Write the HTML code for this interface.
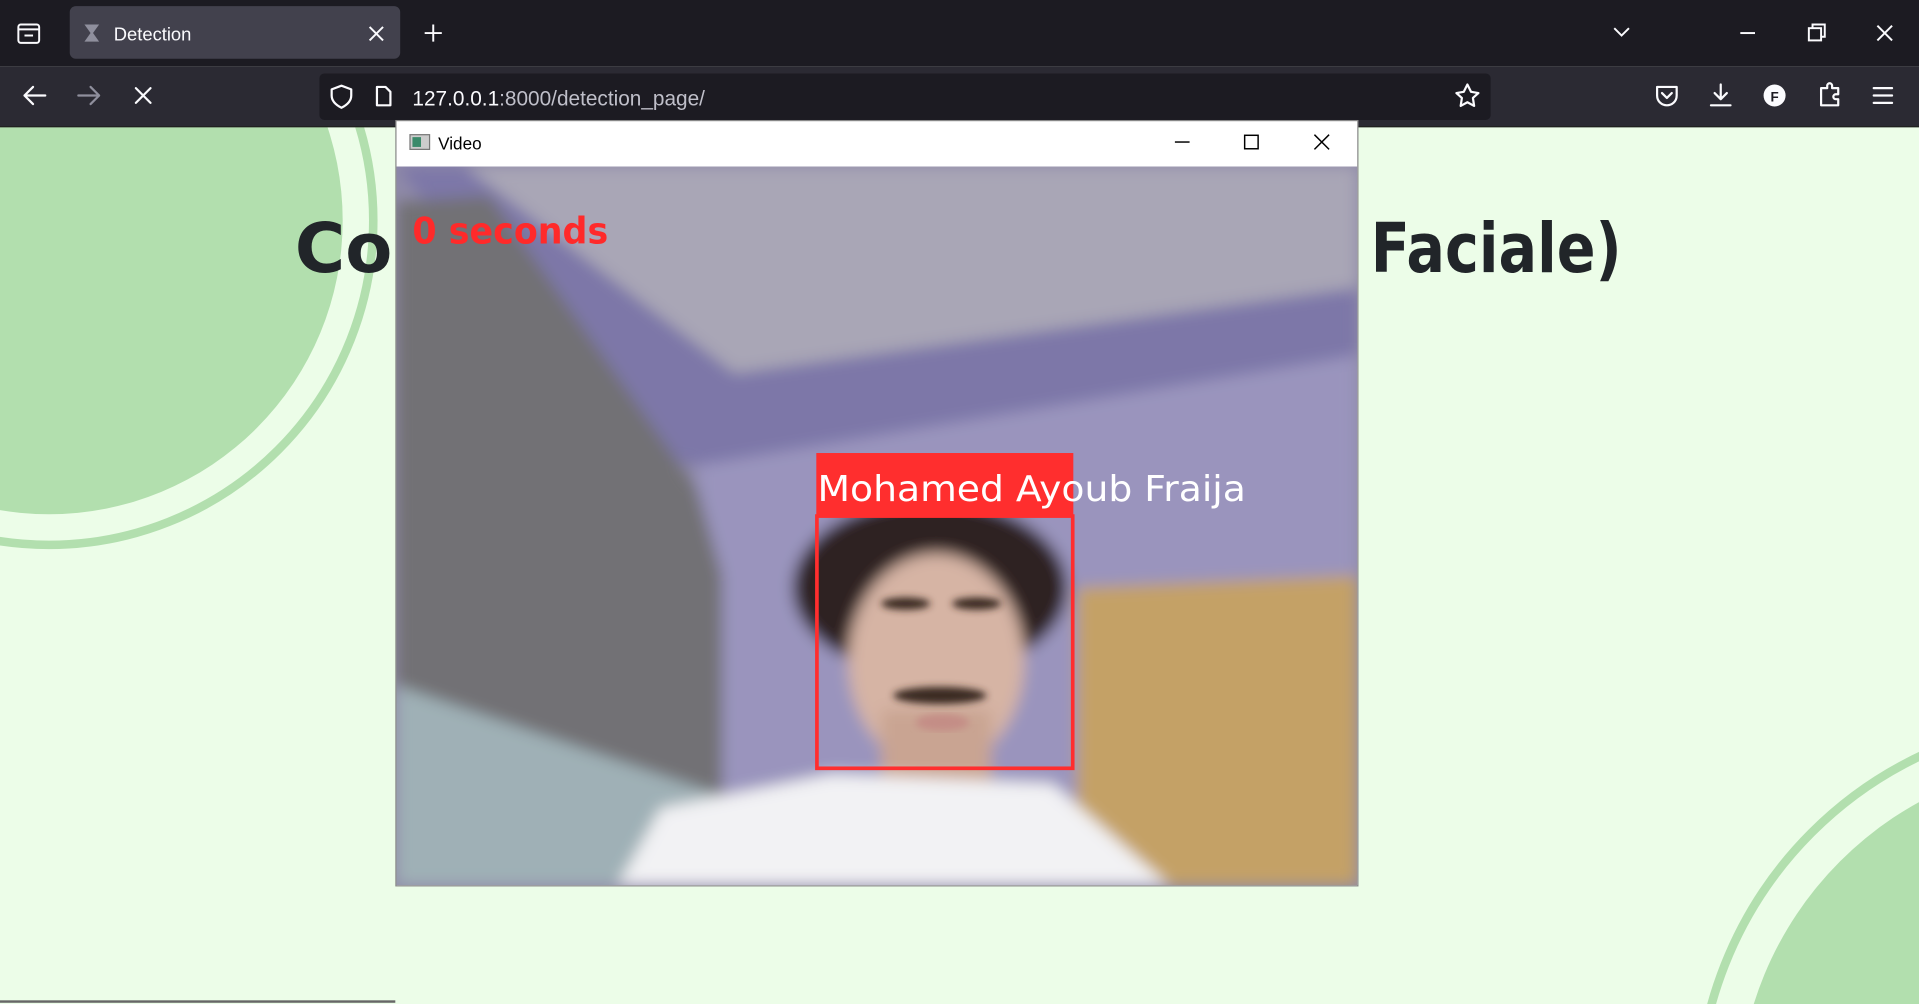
<!DOCTYPE html>
<html><head><meta charset="utf-8"><style>
html,body{margin:0;padding:0;width:1919px;height:1004px;overflow:hidden;background:#ecfde8}
svg{display:block;position:absolute;left:0;top:0}
</style></head><body>
<svg width="1919" height="1004" viewBox="0 0 1568 820" preserveAspectRatio="none" xmlns="http://www.w3.org/2000/svg" font-family="Liberation Sans, sans-serif">
<defs>
<filter id="bl"><feGaussianBlur stdDeviation="6"/></filter>
<filter id="bl2"><feGaussianBlur stdDeviation="3"/></filter>
<clipPath id="vc"><rect x="324" y="136" width="785" height="587"/></clipPath>
<clipPath id="pg"><rect x="0" y="104" width="1568" height="716"/></clipPath>
</defs>
<rect x="0" y="104" width="1568" height="716" fill="#ecfde8"/>
<g clip-path="url(#pg)">
<circle cx="40" cy="180" r="265" fill="none" stroke="#b2dfae" stroke-width="7"/>
<circle cx="40" cy="180" r="240" fill="#b2dfae"/>
<circle cx="1705" cy="905" r="318" fill="none" stroke="#b2dfae" stroke-width="7"/>
<circle cx="1705" cy="905" r="285" fill="#b2dfae"/>
</g>
<text x="241" y="222" font-size="56" font-weight="bold" fill="#212529" font-family="DejaVu Sans, sans-serif">Contrôle de</text>
<text x="1120" y="222" font-size="56" font-weight="bold" fill="#212529" font-family="DejaVu Sans, sans-serif" textLength="205" lengthAdjust="spacingAndGlyphs">Faciale)</text>
<rect x="0" y="817" width="323" height="2" fill="#666"/>
<rect x="0" y="0" width="1568" height="54" fill="#1c1b22"/>
<rect x="57" y="5" width="270" height="43" rx="5" fill="#42414d"/>
<g fill="none" stroke="#fbfbfe" stroke-width="1.6">
<rect x="15" y="20" width="17" height="15" rx="2"/><line x1="15" y1="24" x2="32" y2="24"/><line x1="20" y1="29" x2="27" y2="29"/>
<path d="M302 22l11 11M313 22l-11 11"/>
<path d="M354 20v14M347 27h14"/>
<path d="M1319 23l6 6 6-6"/>
<path d="M1422 27h12"/>
<rect x="1478" y="23" width="10" height="10"/><path d="M1481 23v-3h10v10h-3"/>
<path d="M1534 21l12 12M1546 21l-12 12"/>
</g>
<path d="M69 20h12l-5 7 5 7h-12l5-7z" fill="#8f8f9d"/>
<text x="93" y="33" font-size="15" fill="#fbfbfe">Detection</text>
<rect x="0" y="54" width="1568" height="49" fill="#2b2a33"/>
<rect x="0" y="103" width="1568" height="1" fill="#0c0c0d"/>
<rect x="261" y="60" width="957" height="38" rx="4" fill="#1c1b22"/>
<g fill="none" stroke="#fbfbfe" stroke-width="1.8" stroke-linecap="round" stroke-linejoin="round">
<path d="M37 78H20M27 71l-7 7 7 7"/>
<path d="M64 78h17M74 71l7 7-7 7" stroke="#8f8f9d"/>
<path d="M111 72l12 12M123 72l-12 12"/>
<path d="M279 70l8 3v5c0 5-4 8-8 10-4-2-8-5-8-10v-5z"/>
<path d="M308 71h7l4 4v11h-11z"/>
<path d="M1199 69l3 6 6 1-4.5 4 1 6.5-5.5-3-5.5 3 1-6.5-4.5-4 6-1z"/>
<path d="M1354 71h16v7c0 5-4 8-8 8s-8-3-8-8z"/><path d="M1358 76l4 4 4-4"/>
<path d="M1406 69v12M1401 76l5 5 5-5M1398 86h16"/>
<path d="M1488 72h5v-2a2 2 0 0 1 4 0v2h5v5h-2a2 2 0 0 0 0 4h2v5h-14z"/>
<path d="M1531 72h15M1531 78h15M1531 84h15"/>
</g>
<circle cx="1450" cy="78" r="9" fill="#fbfbfe"/><text x="1450" y="83" font-size="11" font-weight="bold" text-anchor="middle" fill="#1c1b22">F</text>
<text x="337" y="86" font-size="17" fill="#fbfbfe">127.0.0.1<tspan fill="#bfbfc9">:8000/detection_page/</tspan></text>
<rect x="323.5" y="98.5" width="786" height="625" fill="#fff" stroke="#888"/>
<rect x="335" y="110" width="16" height="12" fill="#ccc" stroke="#777" stroke-width="1"/><rect x="337" y="112" width="7" height="8" fill="#3a8a6a"/>
<text x="358" y="122" font-size="14" fill="#000">Video</text>
<g fill="none" stroke="#000" stroke-width="1.2">
<path d="M960 116h12"/><rect x="1017" y="110.5" width="11" height="11"/><path d="M1074 110l12 12M1086 110l-12 12"/>
</g>
<g clip-path="url(#vc)">
<rect x="324" y="136" width="785" height="587" fill="#8f8aa8"/>
<g filter="url(#bl)">
<polygon points="380,136 1109,136 1109,235 600,305" fill="#a9a6b6"/>
<polygon points="324,136 380,136 600,305 1109,235 1109,290 570,380 520,370" fill="#7d77a8"/>
<polygon points="570,380 1109,290 1109,480 880,480 880,700 570,700" fill="#9a94bd"/>
<polygon points="324,165 400,160 570,400 590,470 590,650 324,560" fill="#727175"/>
<polygon points="324,560 590,650 520,723 324,723" fill="#9fb0b6"/>
<polygon points="880,480 1109,470 1109,723 880,723" fill="#c4a166"/>
<ellipse cx="760" cy="480" rx="112" ry="72" fill="#2d2422"/>
<ellipse cx="765" cy="540" rx="72" ry="88" fill="#d6b4a4"/>
<rect x="720" y="580" width="90" height="70" fill="#c9a492"/>
<path d="M505,723 L540,660 L680,632 L860,640 L955,723 Z" fill="#f2f2f4"/>
</g>
<g filter="url(#bl2)" fill="#3a2a24">
<ellipse cx="740" cy="493" rx="20" ry="5"/><ellipse cx="798" cy="493" rx="20" ry="5"/>
<ellipse cx="768" cy="568" rx="38" ry="7"/>
</g>
<ellipse cx="770" cy="590" rx="22" ry="7" fill="#c48d86" filter="url(#bl2)"/>
<rect x="667" y="370" width="210" height="51" fill="#ff2e2e"/>
<rect x="667.5" y="421.5" width="209" height="206" fill="none" stroke="#ff2e2e" stroke-width="3"/>
<text x="668" y="409" font-size="29" fill="#fff" font-family="DejaVu Sans, sans-serif" textLength="350" lengthAdjust="spacingAndGlyphs">Mohamed Ayoub Fraija</text>
<text x="337" y="199" font-size="30" font-weight="bold" fill="#ff2a2a" font-family="DejaVu Sans, sans-serif" textLength="160" lengthAdjust="spacingAndGlyphs">0 seconds</text>
</g>
</svg>
</body></html>
